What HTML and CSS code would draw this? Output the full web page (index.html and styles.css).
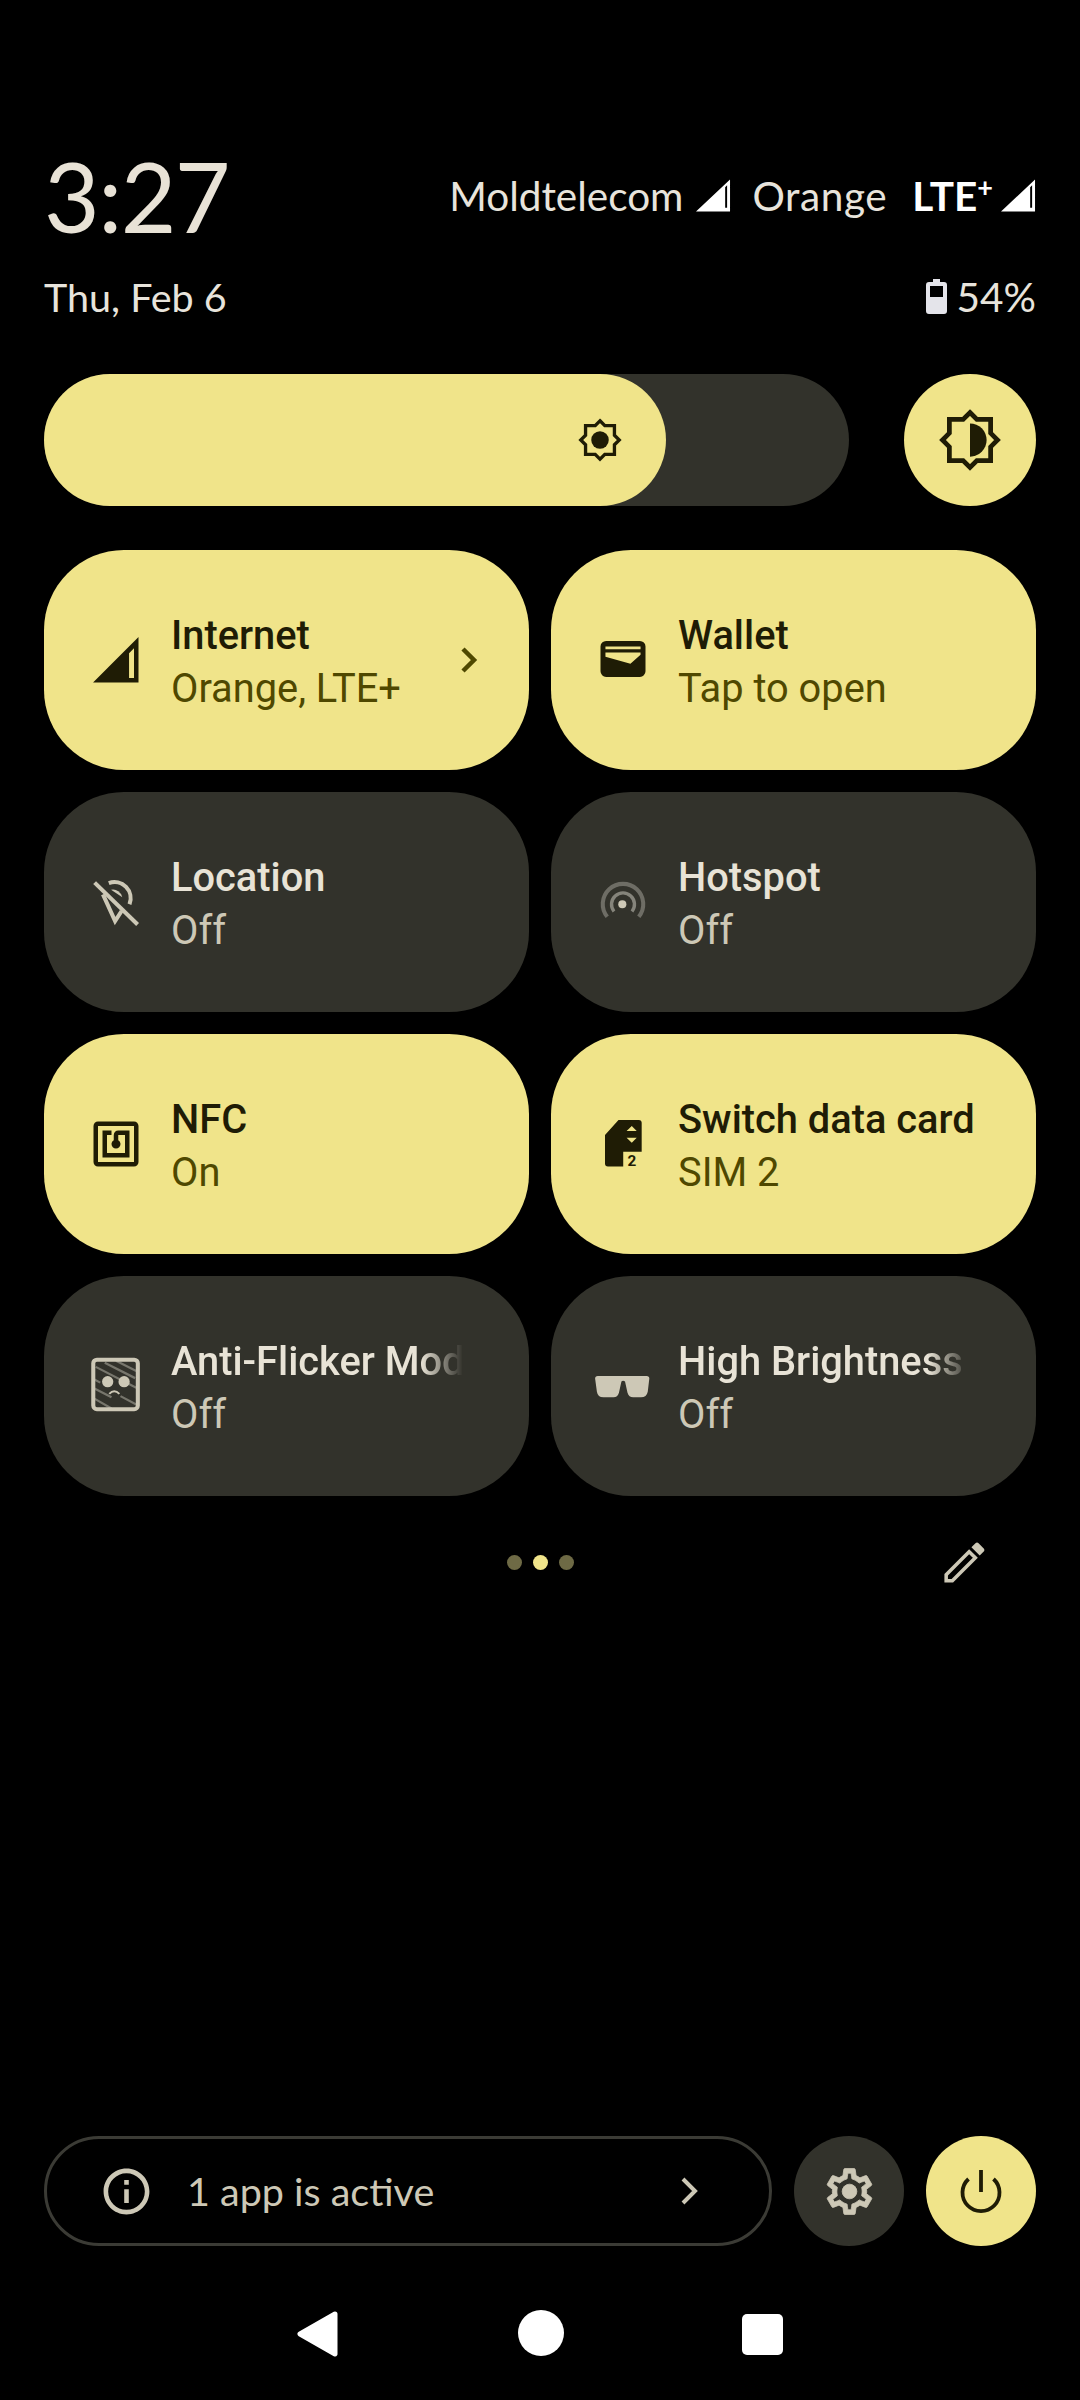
FILE: index.html
```html
<!DOCTYPE html>
<html lang="en">

<head>
  <meta charset="UTF-8">
  <meta name="viewport" content="width=device-width, initial-scale=1.0">
  <title>Quick settings</title>

  <link rel="stylesheet" href="styles.css">
</head>

<body>
  <main class="shade">
    <header class="top">
      <div class="clock-row">
        <span class="clock">3:27</span>
        <div class="carriers">
          <span class="carrier">Moldtelecom</span>
          <svg class="bar-icon" viewBox="0 0 36 33"><path fill-rule="evenodd" d="M0 33 35 0v33zM30 29h2V6l-2 2z"/></svg>
          <span class="carrier carrier-two">Orange</span>
          <span class="network">LTE<sup>+</sup></span>
          <svg class="bar-icon bar-icon-last" viewBox="0 0 36 33"><path fill-rule="evenodd" d="M0 33 35 0v33zM30 29h2V6l-2 2z"/></svg>
        </div>
      </div>
      <div class="date-row">
        <span>Thu, Feb 6</span>
        <div class="battery">
          <svg class="battery-icon" viewBox="0 0 21 35"><path class="battery-body" fill-rule="evenodd" d="M7 0h7v3h4q3 0 3 3v26q0 3-3 3H3q-3 0-3-3V6q0-3 3-3h4zM4 7v11h13V7z"/></svg>
          <span>54%</span>
        </div>
      </div>
    </header>

    <section class="brightness">
      <div class="slider">
        <div class="slider-fill">
          <svg class="sun-small" viewBox="-24 -24 48 48">
            <path class="sun-line" d="M0-22 5.500-16.500h11v11L22 0l-5.500 5.500v11h-11L0 22l-5.500-5.500h-11v-11L-22 0l5.500-5.500v-11h11z"/>
            <circle class="sun-fill" r="10"/>
          </svg>
        </div>
      </div>
      <button class="round-btn round-on">
        <svg class="sun-big" viewBox="-24 -24 48 48">
          <path class="sun-line" d="M0-22 5.500-16.500h11v11L22 0l-5.500 5.500v11h-11L0 22l-5.500-5.500h-11v-11L-22 0l5.500-5.500v-11h11z"/>
          <path class="sun-fill" d="M0-13.300a13.300 13.300 0 0 1 0 26.600z"/>
        </svg>
      </button>
    </section>

    <section class="tiles">
      <div class="tile tile-on">
        <svg class="tile-icon" viewBox="0 0 24 24"><path fill-rule="evenodd" d="M1.800 22 22 1.800V22zM17.800 20H20V6.800l-2.200 2.200z"/></svg>
        <div class="tile-text">
          <div class="tile-title">Internet</div>
          <div class="tile-sub">Orange, LTE+</div>
        </div>
        <svg class="tile-chevron" viewBox="0 0 18 26"><path d="M3 2l11 11L3 24"/></svg>
      </div>

      <div class="tile tile-on">
        <svg class="tile-icon" viewBox="0 0 24 24"><path fill-rule="evenodd" d="M4.500 3.500h15a2.500 2.500 0 0 1 2.500 2.500v11a2.500 2.500 0 0 1-2.500 2.500h-15A2.500 2.500 0 0 1 2 17V6a2.500 2.500 0 0 1 2.500-2.500zM4.200 6v1.200h15.600V6zM4.200 8.700v1.800l11.100 3.200 4.500-4v-1z"/></svg>
        <div class="tile-text">
          <div class="tile-title">Wallet</div>
          <div class="tile-sub">Tap to open</div>
        </div>
      </div>

      <div class="tile tile-off">
        <svg class="tile-icon" viewBox="0 0 24 24">
          <path class="icon-line icon-thick" d="M8.800 3.600A7.200 7.200 0 0 1 18 13M6.200 8.600 11.600 20.500l2.900-4.500"/>
          <path d="M9.800 6.600a4.200 4.200 0 0 1 5 3.300z"/>
          <path class="icon-line icon-thick" d="M2.500 3.400 21.600 22"/>
        </svg>
        <div class="tile-text">
          <div class="tile-title">Location</div>
          <div class="tile-sub">Off</div>
        </div>
      </div>

      <div class="tile tile-off">
        <svg class="tile-icon" viewBox="0 0 24 24">
          <path class="icon-line icon-dim" d="M5 18.600a9 9 0 1 1 14 0"/>
          <path class="icon-line icon-mid" d="M8 16.200a5.100 5.100 0 1 1 8 0"/>
          <circle cx="11.700" cy="13" r="1.800"/>
        </svg>
        <div class="tile-text">
          <div class="tile-title">Hotspot</div>
          <div class="tile-sub">Off</div>
        </div>
      </div>

      <div class="tile tile-on">
        <svg class="tile-icon" viewBox="0 0 24 24"><path d="M20 2H4c-1.100 0-2 .9-2 2v16c0 1.100.9 2 2 2h16c1.100 0 2-.9 2-2V4c0-1.100-.9-2-2-2zm0 18H4V4h16v16zM18 6h-5c-1.100 0-2 .9-2 2v2.280c-.6.35-1 .98-1 1.720 0 1.100.9 2 2 2s2-.9 2-2c0-.74-.4-1.380-1-1.720V8h3v8H8V8h2V6H6v12h12V6z"/></svg>
        <div class="tile-text">
          <div class="tile-title">NFC</div>
          <div class="tile-sub">On</div>
        </div>
      </div>

      <div class="tile tile-on">
        <svg class="tile-icon" viewBox="0 0 24 24">
          <path fill-rule="evenodd" d="M10 1.300h9a1.300 1.300 0 0 1 1.300 1.300V15.400h-8.200V22H5.300A1.300 1.300 0 0 1 4 20.700V8zM15.900 4l-2.300 2.200h4.500zM13.600 9.200l2.300 2.200 2.200-2.200z"/>
          <text class="sim-num" x="15.900" y="21.900">2</text>
        </svg>
        <div class="tile-text">
          <div class="tile-title">Switch data card</div>
          <div class="tile-sub">SIM 2</div>
        </div>
      </div>

      <div class="tile tile-off">
        <svg class="tile-icon" viewBox="0 0 24 24">
          <path class="icon-stripe" d="M7 1.700 20.500 8.500M12 .8l9 4.500M3 3.500 21 12.800M2.200 9 5 10.500M2.200 13 10 17M14 16.500l7 3.700M2.200 17.500 10 22"/>
          <rect class="icon-line icon-thick" x="1.900" y=".3" width="19.800" height="22" rx="1.600"/>
          <circle cx="8.300" cy="10.100" r="2.500"/>
          <circle cx="15.600" cy="10.100" r="2.500"/>
          <path class="icon-thin" d="M9 15.500q2.200-2.300 4.500 0"/>
        </svg>
        <div class="tile-text">
          <div class="tile-title tile-fade">Anti-Flicker Mod</div>
          <div class="tile-sub">Off</div>
        </div>
      </div>

      <div class="tile tile-off">
        <svg class="tile-icon" viewBox="0 0 24 24"><path d="M-.4 8.700Q-.4 7.500.8 7.500H22.500Q23.700 7.500 23.700 8.700L23 14.500Q22.500 17 20 17H16.500Q14.600 17 14 15L12.900 10Q12 9.300 11.300 10L10.200 15Q9.600 17 7.800 17H3.300Q.8 17 .4 14.500z"/></svg>
        <div class="tile-text">
          <div class="tile-title tile-fade">High Brightness</div>
          <div class="tile-sub">Off</div>
        </div>
      </div>
    </section>

    <section class="pager">
      <div class="dots">
        <span class="dot"></span>
        <span class="dot dot-active"></span>
        <span class="dot"></span>
      </div>
      <svg class="pencil" viewBox="0 0 24 24">
        <path class="pencil-body" d="M3.700 20.300V17.500L14.100 7.100 16.900 9.900 6.500 20.300z"/>
        <path d="M20.710 5.630l-2.340-2.340c-.39-.39-1.020-.39-1.410 0l-1.830 1.830 3.750 3.750 1.830-1.830c.39-.39.39-1.020 0-1.410z"/>
      </svg>
    </section>

    <footer class="footer">
      <div class="active-apps">
        <svg class="footer-icon" viewBox="0 0 24 24"><path d="M11 7h2v2h-2zm0 4h2v6h-2zm1-9C6.480 2 2 6.480 2 12s4.480 10 10 10 10-4.480 10-10S17.520 2 12 2zm0 18c-4.410 0-8-3.590-8-8s3.590-8 8-8 8 3.590 8 8-3.590 8-8 8z"/></svg>
        <span class="active-label">1 app is active</span>
        <svg class="active-chevron" viewBox="0 0 18 26"><path d="M3 1l12 12L3 25"/></svg>
      </div>
      <button class="round-btn round-small round-off">
        <svg class="footer-icon gear" viewBox="0 0 24 24">
          <path d="M19.430 12.980c.04-.32.07-.64.07-.98 0-.34-.03-.66-.07-.98l2.110-1.650c.19-.15.24-.42.12-.64l-2-3.460c-.09-.16-.26-.25-.44-.25-.06 0-.12.01-.17.03l-2.490 1c-.52-.4-1.080-.73-1.690-.98l-.38-2.650C14.460 2.180 14.250 2 14 2h-4c-.25 0-.46.18-.49.42l-.38 2.650c-.61.25-1.170.59-1.690.98l-2.490-1c-.06-.02-.12-.03-.18-.03-.17 0-.34.09-.43.25l-2 3.460c-.13.22-.07.49.12.64l2.110 1.650c-.04.32-.07.65-.07.98 0 .33.03.66.07.98l-2.110 1.650c-.19.15-.24.42-.12.64l2 3.460c.09.16.26.25.44.25.06 0 .12-.01.17-.03l2.490-1c.52.4 1.080.73 1.690.98l.38 2.650c.03.24.24.42.49.42h4c.25 0 .46-.18.49-.42l.38-2.650c.61-.25 1.170-.59 1.690-.98l2.490 1c.06.02.12.03.18.03.17 0 .34-.09.43-.25l2-3.460c.12-.22.07-.49-.12-.64l-2.110-1.650zm-1.980-1.710c.04.31.05.52.05.73 0 .21-.02.43-.05.73l-.14 1.130.89.7 1.080.84-.7 1.210-1.270-.51-1.040-.42-.9.68c-.43.32-.84.56-1.250.73l-1.060.43-.16 1.130-.2 1.350h-1.400l-.19-1.350-.16-1.130-1.060-.43c-.43-.18-.83-.41-1.230-.71l-.91-.7-1.060.43-1.270.51-.7-1.210 1.080-.84.89-.7-.14-1.130c-.03-.31-.05-.54-.05-.74s.02-.43.05-.73l.14-1.130-.89-.7-1.080-.84.7-1.210 1.270.51 1.040.42.9-.68c.43-.32.84-.56 1.250-.73l1.060-.43.16-1.130.2-1.350h1.390l.19 1.350.16 1.130 1.060.43c.43.18.83.41 1.230.71l.91.7 1.060-.43 1.270-.51.7 1.210-1.070.85-.89.7.14 1.130z"/>
          <circle cx="12" cy="12" r="3.200"/>
        </svg>
      </button>
      <button class="round-btn round-small round-on">
        <svg class="power" viewBox="0 0 44 46"><path d="M22 2V24M9.500 11A18.500 18.500 0 1 0 34.500 11"/></svg>
      </button>
    </footer>

    <nav class="nav">
      <svg class="nav-back" viewBox="0 0 41 46"><path d="M38 3 3 23l35 20z"/></svg>
      <span class="nav-home"></span>
      <span class="nav-recent"></span>
    </nav>
  </main>
</body>

</html>
```

FILE: styles.css
```css
* {
  box-sizing: border-box;
}

body {
  background: #000;
  margin: 0;
}

svg {
  display: block;
  flex-shrink: 0;
  overflow: visible;
}

.shade {
  display: flex;
  flex-direction: column;
  font-family: Roboto, sans-serif;
  height: 2400px;
  width: 1080px;
}

/* clock and status */
.top {
  color: #e8e4dc;
  font-family: Lato, sans-serif;
  height: 374px;
  padding: 141px 44px 0;
}

.clock-row {
  align-items: center;
  display: flex;
  height: 110px;
  justify-content: space-between;
}

.clock {
  color: #e8e2d6;
  font-size: 96px;
  letter-spacing: -1.500px;
  line-height: 110px;
}

.carriers {
  align-items: center;
  display: flex;
  font-size: 40.500px;
  margin-bottom: 1px;
}

.bar-icon {
  fill: #fff;
  height: 33px;
  margin-left: 13px;
  width: 35px;
}

.bar-icon-last {
  margin-left: 8px;
}

.carrier-two {
  letter-spacing: .6px;
  margin-left: 21px;
}

.network {
  color: #fff;
  font-weight: 700;
  margin-left: 25px;
}

.network sup {
  font-size: 27px;
  line-height: 0;
}

.date-row {
  align-items: center;
  display: flex;
  font-size: 39.500px;
  justify-content: space-between;
  margin-top: 21px;
}

.battery {
  align-items: center;
  display: flex;
  font-size: 40.500px;
  gap: 10px;
}

.battery-icon {
  height: 35px;
  width: 21px;
}

.battery-body {
  fill: #e4e4ea;
}

/* brightness */
.brightness {
  display: flex;
  justify-content: space-between;
  padding: 0 44px;
}

.slider {
  background: #32322b;
  border-radius: 66px;
  height: 132px;
  width: 805px;
}

.slider-fill {
  align-items: center;
  background: #f0e48a;
  border-radius: 66px;
  display: flex;
  height: 132px;
  justify-content: flex-end;
  padding-right: 45px;
  width: 622px;
}

.sun-small {
  height: 42px;
  width: 42px;
}

.sun-big {
  height: 60px;
  width: 60px;
}

.sun-line {
  fill: none;
  stroke: #1f1c05;
  stroke-width: 3.800;
}

.sun-fill {
  fill: #1f1c05;
}

.round-btn {
  align-items: center;
  border: 0;
  border-radius: 50%;
  display: flex;
  height: 132px;
  justify-content: center;
  padding: 0;
  width: 132px;
}

.round-small {
  height: 110px;
  width: 110px;
}

.round-on {
  background: #f0e48a;
}

.round-off {
  background: #32322b;
  fill: #cdc8b6;
}

/* tiles */
.tiles {
  display: grid;
  gap: 22px;
  grid-template-columns: 485px 485px;
  margin-top: 44px;
  padding: 0 44px;
}

.tile {
  align-items: center;
  border-radius: 80px;
  display: flex;
  height: 220px;
  padding-left: 45px;
}

.tile-on {
  background: #f0e48a;
  color: #1f1c05;
  fill: #1f1c05;
}

.tile-off {
  background: #32322b;
  color: #e8e3d6;
  fill: #cdc8b6;
}

.tile-icon {
  height: 54px;
  margin-right: 28px;
  width: 54px;
}

.tile-text {
  padding-top: 5px;
  width: 302px;
}

.tile-title {
  font-size: 39.800px;
  font-weight: 500;
  line-height: 53px;
  white-space: nowrap;
}

.tile-fade {
  mask-image: linear-gradient(to right, #000 250px, transparent 292px);
  width: 300px;
}

.tile-sub {
  font-size: 39.800px;
  line-height: 54px;
  white-space: nowrap;
}

.tile-on .tile-sub {
  color: #4f4800;
}

.tile-off .tile-sub {
  color: #cdc8b6;
}

.tile-chevron {
  fill: none;
  height: 26px;
  margin-left: -13px;
  stroke: #4f4800;
  stroke-width: 4.500;
  width: 18px;
}

.icon-line {
  fill: none;
  stroke: #cdc8b6;
  stroke-width: 1.500;
}

.icon-thick {
  stroke-width: 1.800;
}

.icon-dim {
  stroke: #6e6d65;
  stroke-width: 1.800;
}

.icon-mid {
  stroke: #85847b;
}

.icon-stripe {
  fill: none;
  stroke: #77766c;
  stroke-width: 1;
}

.icon-thin {
  fill: none;
  stroke: #cdc8b6;
  stroke-width: .9;
}

.sim-num {
  font-family: Roboto, sans-serif;
  font-size: 6.800px;
  font-weight: 700;
  text-anchor: middle;
}

/* pager row */
.pager {
  align-items: center;
  display: grid;
  grid-template-columns: 1fr auto 1fr;
  height: 52px;
  margin-top: 40px;
  padding: 0 44px;
}

.dots {
  display: flex;
  gap: 11px;
  grid-column: 2;
}

.dot {
  background: #6e6a45;
  border-radius: 50%;
  height: 15px;
  width: 15px;
}

.dot-active {
  background: #f0e48a;
}

.pencil {
  fill: #cdc8b6;
  height: 53px;
  justify-self: end;
  margin-right: 45px;
  width: 53px;
}

.pencil-body {
  fill: none;
  stroke: #cdc8b6;
  stroke-width: 1.600;
}

/* footer */
.footer {
  display: flex;
  gap: 22px;
  height: 110px;
  margin-top: auto;
  padding: 0 44px;
}

.active-apps {
  align-items: center;
  border: 3px solid #3b3b35;
  border-radius: 55px;
  color: #cdc8b6;
  display: flex;
  fill: #cdc8b6;
  flex: 1;
  padding-left: 52px;
}

.footer-icon {
  height: 55px;
  width: 55px;
}

.gear {
  stroke: #cdc8b6;
  stroke-width: .35;
}

.active-label {
  font-family: Lato, sans-serif;
  font-size: 39.500px;
  margin-bottom: 2px;
  margin-left: 33px;
}

.active-chevron {
  fill: none;
  height: 26px;
  margin-left: auto;
  margin-right: 71px;
  stroke: #cdc8b6;
  stroke-width: 4;
  width: 18px;
}

.power {
  fill: none;
  height: 46px;
  stroke: #1f1c05;
  stroke-width: 3.800;
  width: 44px;
}

/* nav bar */
.nav {
  align-items: flex-start;
  display: flex;
  gap: 180px;
  height: 154px;
  justify-content: center;
  padding-top: 64px;
}

.nav-back {
  fill: #fff;
  height: 46px;
  margin-top: 1px;
  stroke: #fff;
  stroke-linejoin: round;
  stroke-width: 5;
  width: 41px;
}

.nav-home {
  background: #fff;
  border-radius: 50%;
  height: 46px;
  width: 46px;
}

.nav-recent {
  background: #fff;
  border-radius: 5px;
  height: 41px;
  margin-left: -2px;
  margin-top: 4px;
  width: 41px;
}
```
